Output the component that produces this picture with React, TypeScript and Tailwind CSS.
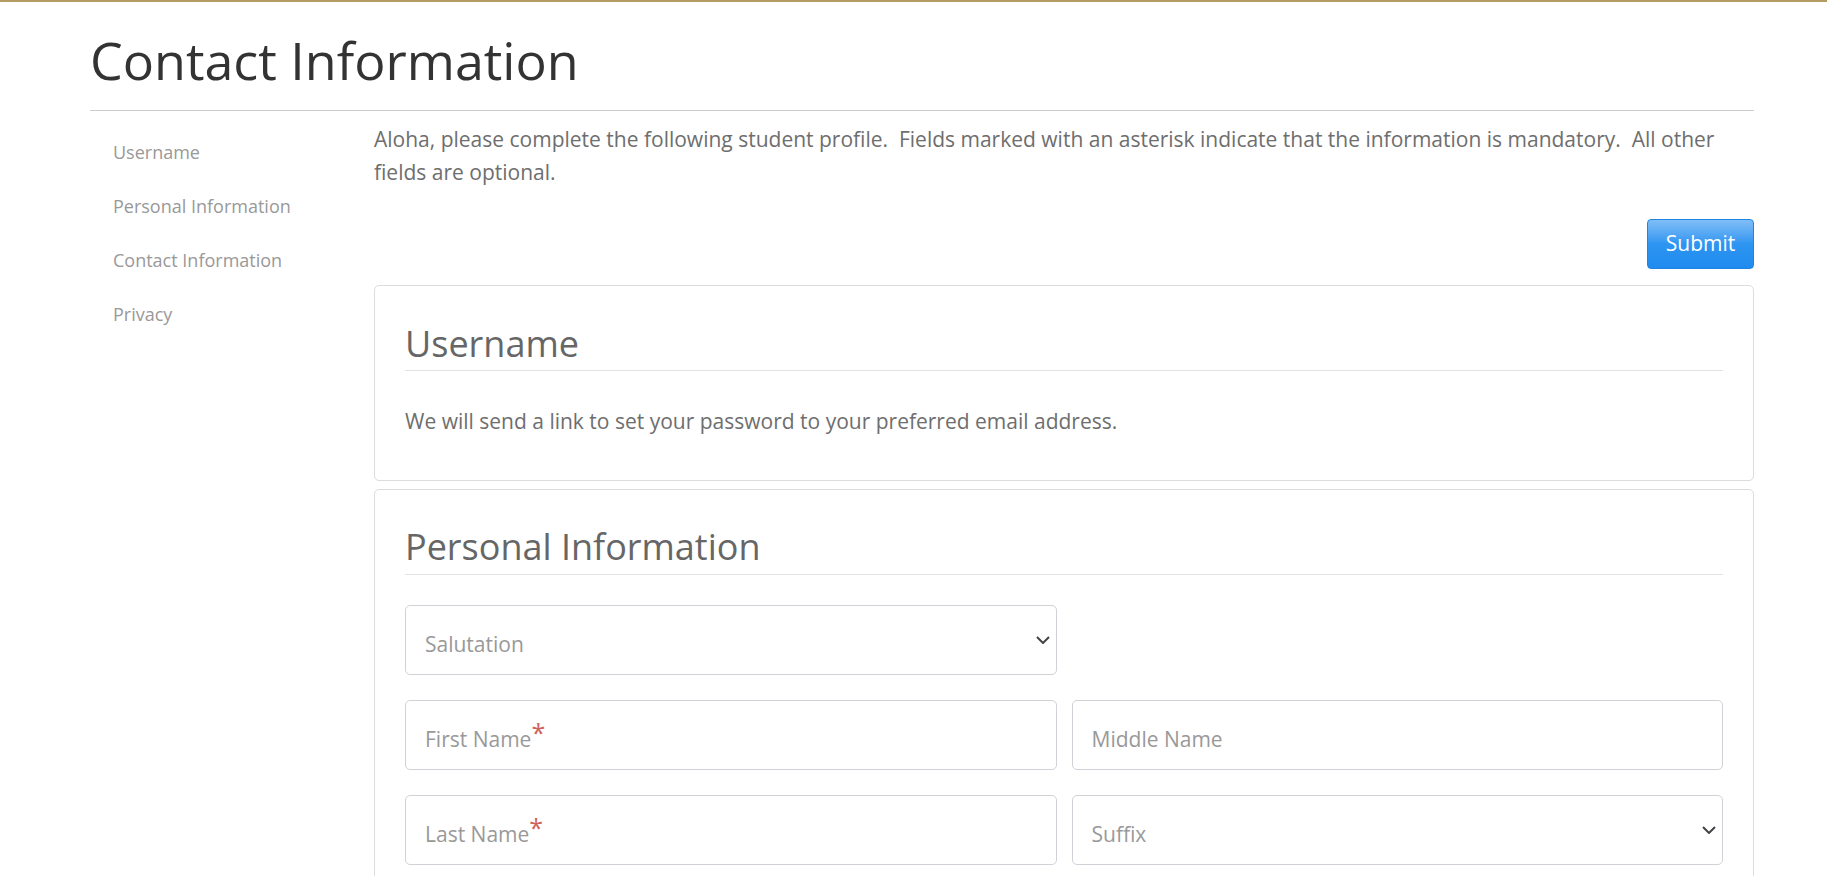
const navItems = ["Username", "Personal Information", "Contact Information", "Privacy"];

function Field({ label, required, select }: { label: string; required?: boolean; select?: boolean }) {
  return (
    <div className="flex h-[70px] items-center justify-between rounded-[5px] border border-[#cfd2d6] bg-white pl-[19px] pr-[6px]">
      <span className="pt-[9px] text-[21px] text-[#999]">
        {label}
        {required && <span className="relative -top-[5px] text-[25px] leading-none text-[#d0605b]">*</span>}
      </span>
      {select && (
        <svg width="14" height="8" viewBox="0 0 14 8" className="text-[#444]">
          <polyline points="1,1 7,7 13,1" fill="none" stroke="currentColor" strokeWidth="2" />
        </svg>
      )}
    </div>
  );
}

export default function App() {
  return (
    <div className="min-h-screen border-t-2 border-[#b59c62] bg-white font-['Open_Sans',sans-serif]">
      <div className="ml-[90px] w-[1664px]">
        <h1 className="border-b border-[#ccc] pb-[22px] pt-[29px] text-[52px] leading-[57px] text-[#333]">
          Contact Information
        </h1>

        <div className="flex">
          <ul className="w-[284px] shrink-0 pl-[23px] pt-[14px]">
            {navItems.map((item) => (
              <li key={item} className="h-[54px] text-[18px] leading-[54px] text-[#999]">
                {item}
              </li>
            ))}
          </ul>

          <div className="flex flex-1 flex-col pb-10">
            <p className="pt-[12px] text-[21px] leading-[33px] text-[#6e6e6e]">
              Aloha, please complete the following student profile.&nbsp; Fields marked with an asterisk
              indicate that the information is mandatory.&nbsp; All other fields are optional.
            </p>

            <div className="mt-[30px] flex justify-end">
              <button className="h-[50px] w-[107px] rounded-[4px] border border-[#1f84e3] bg-gradient-to-b from-[#7fbef7] via-[#2d95f1] to-[#1f8bee] text-[21px] text-white">
                Submit
              </button>
            </div>

            <div className="mt-[16px] rounded-[5px] border border-[#dcdcdc] px-[30px] pb-[43px] pt-[36px]">
              <h2 className="border-b border-[#e3e3e3] pb-[4px] text-[36px] leading-[44px] text-[#666]">
                Username
              </h2>
              <p className="mt-[34px] text-[21px] leading-[32px] text-[#6e6e6e]">
                We will send a link to set your password to your preferred email address.
              </p>
            </div>

            <div className="mt-[8px] rounded-[5px] border border-[#dcdcdc] px-[30px] pb-[40px] pt-[35px]">
              <h2 className="border-b border-[#e3e3e3] pb-[5px] text-[36px] leading-[44px] text-[#666]">
                Personal Information
              </h2>
              <div className="mt-[30px] grid grid-cols-2 gap-x-[15px] gap-y-[25px]">
                <Field label="Salutation" select />
                <div />
                <Field label="First Name" required />
                <Field label="Middle Name" />
                <Field label="Last Name" required />
                <Field label="Suffix" select />
              </div>
            </div>
          </div>
        </div>
      </div>
    </div>
  );
}
